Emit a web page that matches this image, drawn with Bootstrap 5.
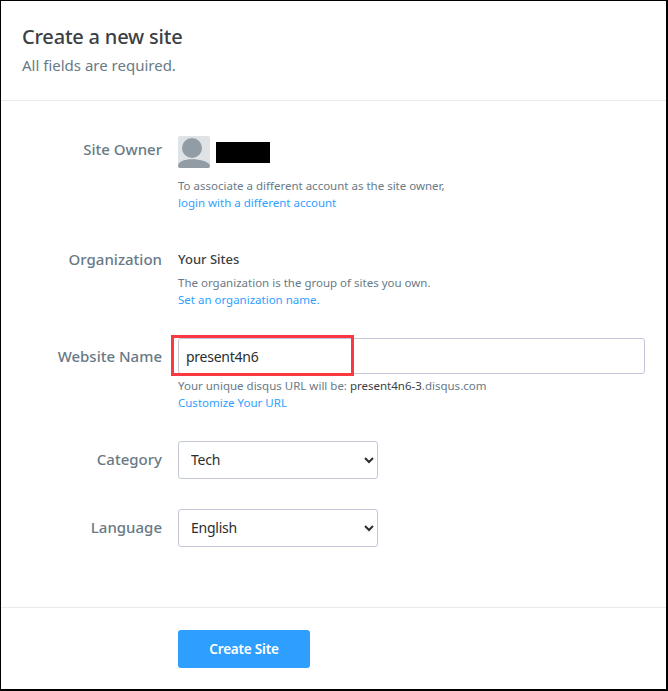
<!DOCTYPE html>
<html lang="en"><head><meta charset="utf-8"><title>Create a new site</title>
<link href="https://cdn.jsdelivr.net/npm/bootstrap@5.3.0/dist/css/bootstrap.min.css" rel="stylesheet">
<style>
body{font-family:"Noto Sans","Open Sans",sans-serif;background:#fff;margin:0}
.shell{width:668px;height:691px;border:solid #000;border-width:1px 2px 2px 1px;overflow:hidden}
.head{height:100px;padding:21px 21px 0;border-bottom:1px solid #e7e9ee}
.title{font-size:20px;line-height:30px;font-weight:500;color:#3b4045;margin:0;letter-spacing:-.2px}
.sub{font-size:15px;line-height:24px;color:#687a86;margin:1px 0 0}
.body-area{height:507px;padding-top:35px;border-bottom:1px solid #eaeaea}
.lab{width:161px;flex:none;text-align:right;font-size:15px;font-weight:500;color:#687a86;line-height:26px}
.lab-org{line-height:20px}
.lab-in{line-height:36px}
.lab-sel{line-height:37px}
.val{margin-left:16px;flex:1;padding-right:21px;min-width:0;position:relative}
.m-a{margin-bottom:38px}.m-b{margin-bottom:30px}.m-c{margin-bottom:30px}
.help{font-size:11.5px;line-height:16.5px;color:#687a86}
.help a{color:#2e9fff;text-decoration:none}
.help b{font-weight:400;color:#3b4045}
.gap-a{margin-top:10px}.gap-b{margin-top:6px}.gap-c{margin-top:4px}
.ava{width:32px;height:32px;border-radius:2px;display:block}
.redact{width:54px;height:21px;background:#000;margin-left:6px}
.strong-name{font-size:13px;line-height:20px;font-weight:500;color:#3b4045}
.fld.form-control,.fld.form-select{border:1px solid #c2c6d6;border-radius:3px;font-size:14px;color:#2a2e2e;box-shadow:none;letter-spacing:-.25px}
.fld.form-control{height:36px;padding:0 7px}
.fld.form-select{width:200px;height:38px;padding:0 8px 2px;appearance:auto;background-image:none}
.go.btn{width:132px;height:38px;background:#2e9fff;border:0;border-radius:3px;color:#fff;font-weight:600;font-size:13.5px;padding:0;letter-spacing:-.2px}
.foot{padding:22px 0 0 177px}
.redbox{position:absolute;left:-7px;top:-3px;width:183px;height:41px;border:3px solid #f9393f;pointer-events:none}
</style></head><body>
<div class="shell">
<div class="head"><h1 class="title">Create a new site</h1><p class="sub">All fields are required.</p></div>
<div class="body-area">
<div class="d-flex m-a"><div class="lab">Site Owner</div><div class="val">
<div class="d-flex align-items-center"><svg class="ava" viewBox="0 0 32 32"><rect width="32" height="32" fill="#dfe3e6"/><circle cx="14" cy="12" r="10" fill="#929ca4"/><path d="M0 32v-2c0-4 6-6.700 14-6.700s18 2.700 18 6.700v2z" fill="#929ca4"/></svg><span class="redact"></span></div>
<div class="help gap-a">To associate a different account as the site owner,<br><a href="#">login with a different account</a></div></div></div>
<div class="d-flex m-b"><div class="lab lab-org">Organization</div><div class="val">
<div class="strong-name">Your Sites</div>
<div class="help gap-b">The organization is the group of sites you own.<br><a href="#">Set an organization name.</a></div></div></div>
<div class="d-flex m-b"><div class="lab lab-in">Website Name</div><div class="val">
<input class="form-control fld" value="present4n6">
<div class="redbox"></div>
<div class="help gap-c">Your unique disqus URL will be: <b>present4n6-3</b>.disqus.com<br><a href="#">Customize Your URL</a></div></div></div>
<div class="d-flex m-c"><div class="lab lab-sel">Category</div><div class="val"><select class="form-select fld"><option>Tech</option></select></div></div>
<div class="d-flex"><div class="lab lab-sel">Language</div><div class="val"><select class="form-select fld"><option>English</option></select></div></div>
</div>
<div class="foot"><button class="btn go">Create Site</button></div>
</div>
</body></html>
